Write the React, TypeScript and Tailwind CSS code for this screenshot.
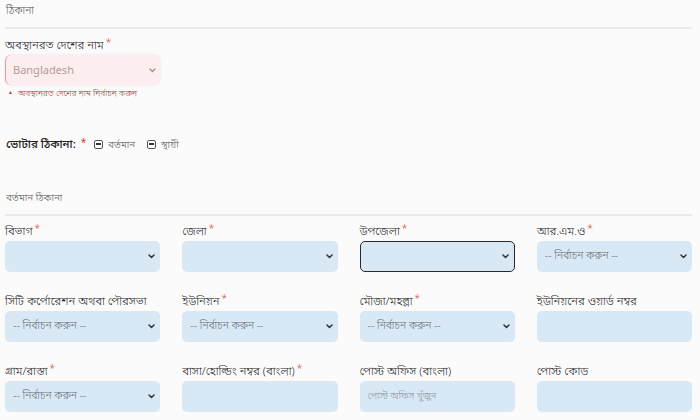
import React from "react";

const Chevron = () => (
  <svg width="7" height="5" viewBox="0 0 7 5" className="shrink-0">
    <path d="M1 1 L3.5 3.5 L6 1" fill="none" stroke="#333" strokeWidth="1.5" strokeLinecap="round" strokeLinejoin="round" />
  </svg>
);

const Label = ({ text, req }: { text: string; req?: boolean }) => (
  <div className="h-[16px] leading-[16px] text-[11.5px] font-light text-[#2a2a2a] whitespace-nowrap">
    {text}
    {req && <span className="text-[#d33] text-[10px] relative top-[-3px] ml-[2px]">*</span>}
  </div>
);

type Field = { label: string; req?: boolean; kind: "select" | "input"; placeholder?: string; focus?: boolean };

const Control = ({ f }: { f: Field }) => {
  const base = "h-[31px] mt-[2px] rounded-[5px] bg-[#d9e8f5] flex items-center pl-[8px] pr-[5px]";
  const border = f.focus ? " border-[1.5px] border-[#2a2a2a]" : "";
  return (
    <div className={base + border}>
      <span className={f.kind === "input" ? "flex-1 text-[9.5px] font-light text-[#8a949e]" : "flex-1 text-[10.5px] font-light text-[#65707a]"}>
        {f.placeholder ?? ""}
      </span>
      {f.kind === "select" && <Chevron />}
    </div>
  );
};

const SEL = "-- নির্বাচন করুন --";

const fields: Field[] = [
  { label: "বিভাগ", req: true, kind: "select" },
  { label: "জেলা", req: true, kind: "select" },
  { label: "উপজেলা", req: true, kind: "select", focus: true },
  { label: "আর.এম.ও", req: true, kind: "select", placeholder: SEL },
  { label: "সিটি কর্পোরেশন অথবা পৌরসভা", kind: "select", placeholder: SEL },
  { label: "ইউনিয়ন", req: true, kind: "select", placeholder: SEL },
  { label: "মৌজা/মহল্লা", req: true, kind: "select", placeholder: SEL },
  { label: "ইউনিয়নের ওয়ার্ড নম্বর", kind: "input" },
  { label: "গ্রাম/রাস্তা", req: true, kind: "select", placeholder: SEL },
  { label: "বাসা/হোল্ডিং নম্বর (বাংলা)", req: true, kind: "input" },
  { label: "পোস্ট অফিস (বাংলা)", kind: "input", placeholder: "পোস্ট অফিস খুঁজুন" },
  { label: "পোস্ট কোড", kind: "input" },
];

const Check = ({ text }: { text: string }) => (
  <div className="flex items-center gap-[5px]">
    <div className="w-[9px] h-[9px] rounded-[2px] border border-[#555] bg-white flex items-center justify-center">
      <div className="w-[5px] h-[1.5px] bg-[#333]" />
    </div>
    <span className="text-[10px] font-light text-[#555]">{text}</span>
  </div>
);

export default function App() {
  return (
    <div
      className="w-[700px] h-[420px] overflow-hidden bg-[#fbfbfb] pl-[5px] pr-[8px]"
      style={{ fontFamily: '"Noto Sans", "Noto Sans Bengali", sans-serif' }}
    >
      <div className="h-[27px] pt-[2px] pl-[1px] text-[10.5px] font-light leading-[16px] text-[#555]">ঠিকানা</div>
      <div className="h-[2px] bg-[#ebebeb]" />

      <div className="mt-[8px] w-[155px]">
        <Label text="অবস্থানরত দেশের নাম" req />
        <div className="mt-[2px] h-[30px] rounded-[6px] bg-[#fceeee] border-l-[1.5px] border-[#c9a8a8] shadow-[0_0_3px_#f6dede] flex items-center pl-[7px] pr-[4px]">
          <span className="flex-1 text-[11px] text-[#b99a9a]">Bangladesh</span>
          <svg width="7" height="5" viewBox="0 0 7 5">
            <path d="M1 1 L3.5 3.5 L6 1" fill="none" stroke="#b08888" strokeWidth="1.3" strokeLinecap="round" />
          </svg>
        </div>
        <div className="mt-[2px] h-[12px] flex items-center gap-[5px] pl-[3px]">
          <span className="text-[5px] text-[#c33]">▲</span>
          <span className="text-[8.5px] font-light text-[#b23a48] whitespace-nowrap">অবস্থানরত দেশের নাম নির্বাচন করুন</span>
        </div>
      </div>

      <div className="mt-[37px] h-[16px] flex items-center">
        <div className="w-[89px] text-[11.5px] font-medium text-[#222] pl-[1px] whitespace-nowrap">
          ভোটার ঠিকানা:<span className="text-[#d33] text-[10px] relative top-[-2px] ml-[5px] font-normal">*</span>
        </div>
        <div className="flex items-center gap-[12px]">
          <Check text="বর্তমান" />
          <Check text="স্থায়ী" />
        </div>
      </div>

      <div className="mt-[37px] h-[16px] leading-[16px] pl-[1px] text-[10px] font-light text-[#555]">বর্তমান ঠিকানা</div>
      <div className="mt-[9px] h-[1.5px] bg-[#ebebeb]" />

      <div className="mt-[7px] grid grid-cols-4 gap-x-[22px] gap-y-[21px]">
        {fields.map((f, i) => (
          <div key={i}>
            <Label text={f.label} req={f.req} />
            <Control f={f} />
          </div>
        ))}
      </div>
    </div>
  );
}
